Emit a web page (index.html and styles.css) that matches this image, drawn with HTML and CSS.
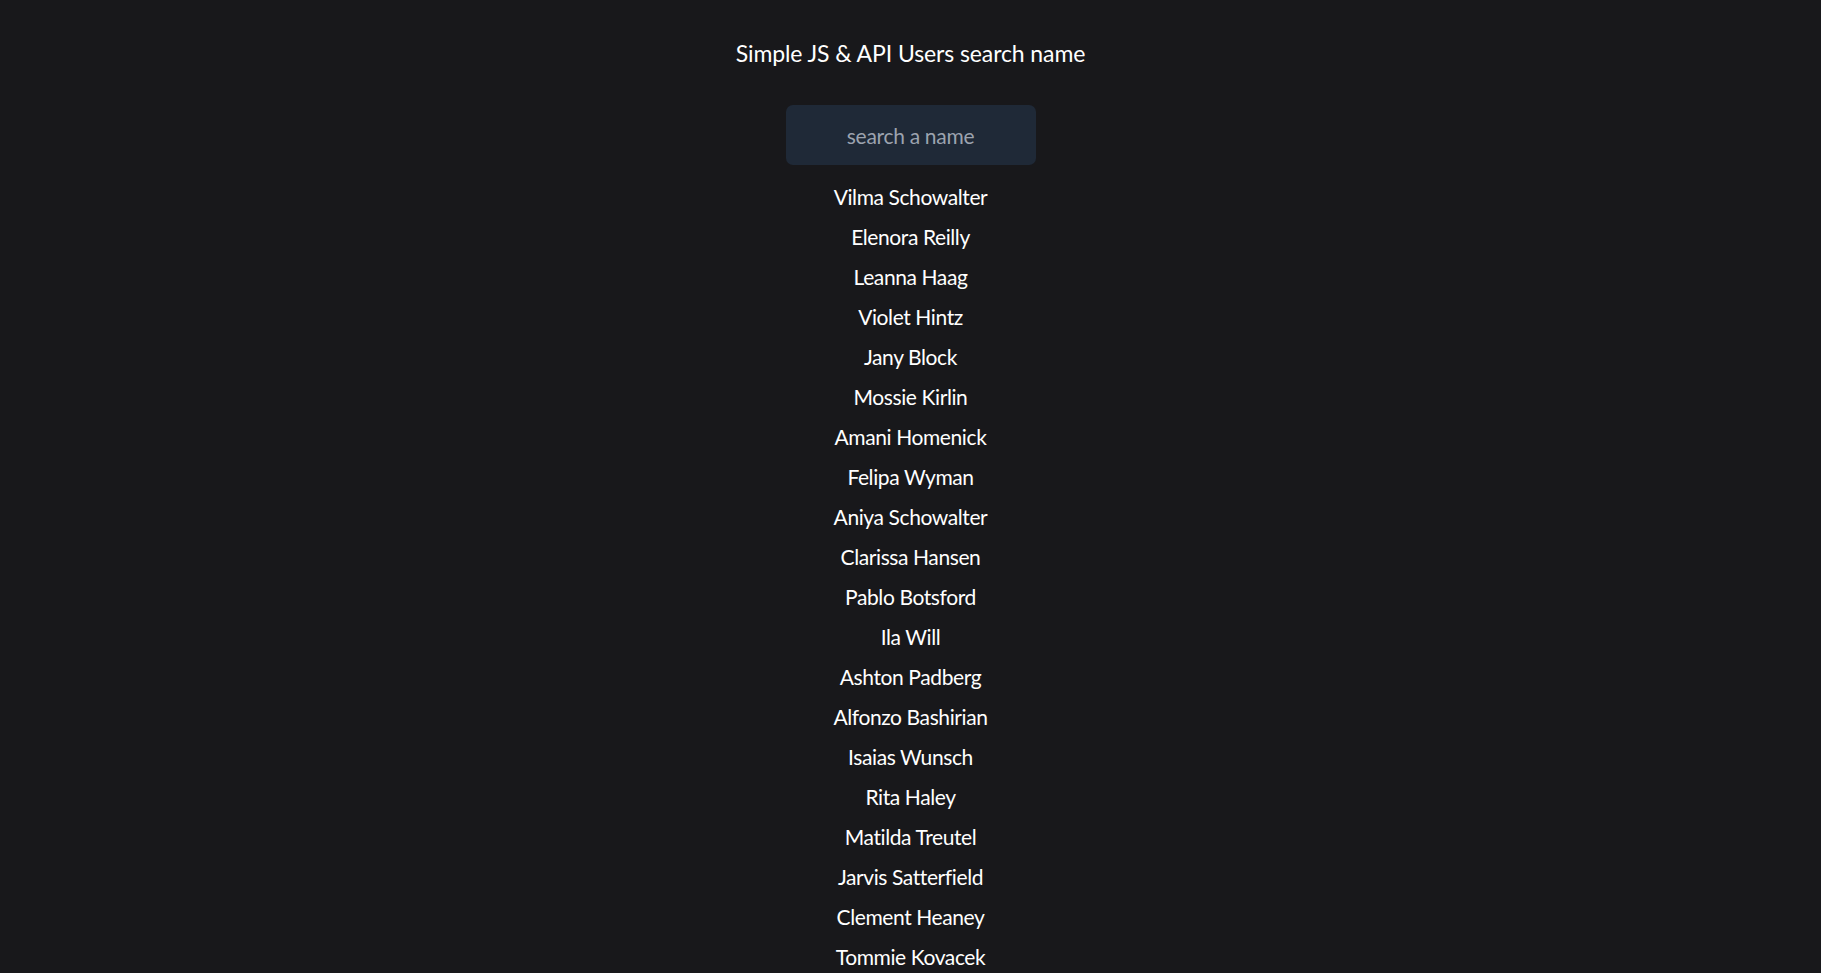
FILE: index.html
```html
<!DOCTYPE html>
<html lang="en">
<head>
<meta charset="utf-8">
<title>Simple JS & API Users search name</title>
<link rel="stylesheet" href="styles.css">
</head>
<body>
<main class="page">
  <h1 class="title">Simple JS &amp; API Users search name</h1>
  <input class="search" type="text" placeholder="search a name">
  <ul class="users">
    <li>Vilma Schowalter</li>
    <li>Elenora Reilly</li>
    <li>Leanna Haag</li>
    <li>Violet Hintz</li>
    <li>Jany Block</li>
    <li>Mossie Kirlin</li>
    <li>Amani Homenick</li>
    <li>Felipa Wyman</li>
    <li>Aniya Schowalter</li>
    <li>Clarissa Hansen</li>
    <li>Pablo Botsford</li>
    <li>Ila Will</li>
    <li>Ashton Padberg</li>
    <li>Alfonzo Bashirian</li>
    <li>Isaias Wunsch</li>
    <li>Rita Haley</li>
    <li>Matilda Treutel</li>
    <li>Jarvis Satterfield</li>
    <li>Clement Heaney</li>
    <li>Tommie Kovacek</li>
  </ul>
</main>
</body>
</html>
```
FILE: styles.css
```css
html, body {
  margin: 0;
  padding: 0;
  background: #18181b;
}
body {
  font-family: Lato, "Noto Sans", sans-serif;
  font-variant-ligatures: none;
  color: #ffffff;
}
.page {
  display: flex;
  flex-direction: column;
  align-items: center;
  padding-top: 37px;
}
.title {
  margin: 0;
  font-size: 23px;
  font-weight: 400;
  line-height: 32px;
  letter-spacing: -0.1px;
}
.search {
  margin-top: 36px;
  width: 250px;
  height: 60px;
  box-sizing: border-box;
  border: none;
  border-radius: 7px;
  background: #1f2937;
  color: #ffffff;
  font-family: inherit;
  font-variant-ligatures: none;
  font-size: 21px;
  letter-spacing: -0.3px;
  text-align: center;
  outline: none;
  padding: 0 12px;
}
.search::placeholder {
  color: #9ca3af;
}
.users {
  list-style: none;
  margin: 12px 0 0;
  padding: 0;
  display: flex;
  flex-direction: column;
  align-items: center;
}
.users li {
  font-size: 21px;
  line-height: 40px;
  letter-spacing: -0.4px;
}
```
